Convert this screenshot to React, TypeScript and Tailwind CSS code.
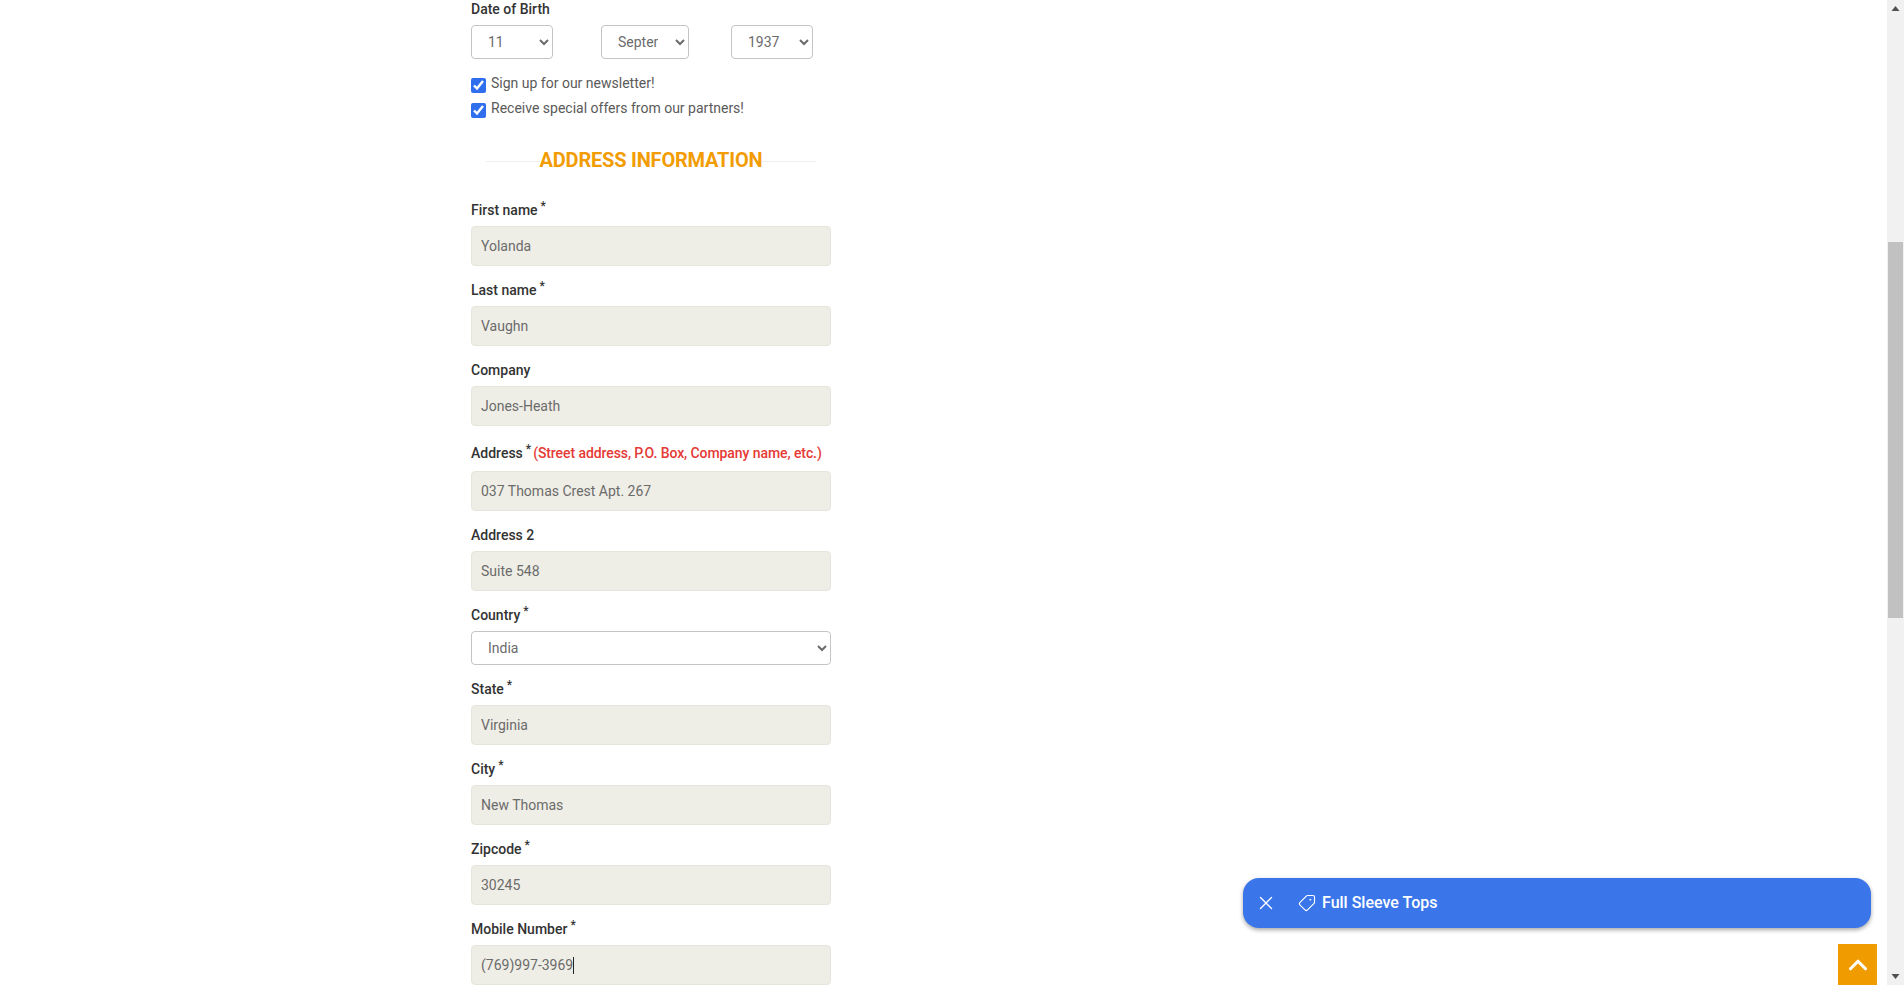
import React from "react";
import { X, Tag, ChevronUp } from "lucide-react";

const Star = () => <sup className="ml-[3px] text-[12px] leading-none text-[#333] top-[-5px] align-baseline relative">*</sup>;

function Label({ text, req, note, cls }: { text: string; req?: boolean; note?: string; cls?: string }) {
  return (
    <div className={"h-5 leading-5 text-[14px] font-medium text-[#333] whitespace-nowrap " + (cls ?? "mt-[14px] mb-[6px]")}>
      {text}
      {req && <Star />}
      {note && <span className="ml-[2px] tracking-[-0.08px] text-[#e53935]">{note}</span>}
    </div>
  );
}

function Field({ value, caret }: { value: string; caret?: boolean }) {
  return (
    <div className="relative">
      <input
        readOnly
        defaultValue={value}
        className="block w-[360px] h-10 px-[9px] rounded-[4px] border border-[#e6e5dc] bg-[#efeee6] text-[14px] text-[#6b6b6b] outline-none"
      />
      {caret && <span className="absolute left-[102px] top-[12px] w-px h-[17px] bg-[#222]" />}
    </div>
  );
}

function Select({ value, w }: { value: string; w: string }) {
  return (
    <select
      defaultValue={value}
      className={"block h-[34px] pl-3 pr-[14px] rounded-[4px] border border-[#c4c4c4] bg-white text-[14px] text-[#6b6b6b] outline-none " + w}
    >
      <option value={value}>{value}</option>
    </select>
  );
}

function Check({ text }: { text: string }) {
  return (
    <label className="flex items-start h-[25px]">
      <input type="checkbox" defaultChecked className="w-[15px] h-[15px] mt-[2px] m-0 accent-[#2f6fed]" />
      <span className="ml-[5px] -mt-px text-[14px] leading-[17px] text-[#5a5a5a]">{text}</span>
    </label>
  );
}

export default function App() {
  return (
    <div className="relative h-[985px] w-full overflow-hidden bg-white flex font-['Roboto',sans-serif]">
      <main className="flex-1 pl-[471px]">
        <div className="w-[360px]">
          <div className="h-[18px] leading-[18px] text-[14px] font-medium text-[#333]">Date of Birth</div>
          <div className="mt-[7px] flex">
            <Select value="11" w="w-[82px]" />
            <div className="ml-[48px]"><Select value="September" w="w-[88px]" /></div>
            <div className="ml-[42px]"><Select value="1937" w="w-[82px]" /></div>
          </div>
          <div className="mt-[17px]">
            <Check text="Sign up for our newsletter!" />
            <Check text="Receive special offers from our partners!" />
          </div>
          <div className="relative mt-[21px] h-[26px] w-[330px] ml-[15px] flex items-center justify-center">
            <div className="absolute left-0 right-0 top-[14px] h-px bg-[#eeeeee]" />
            <div className="relative px-[8px] text-[20px] leading-[26px] font-bold text-[#f29c04]">
              <span className="bg-white tracking-[-0.2px]">ADDRESS INFORMATION</span>
            </div>
          </div>
          <Label text="First name" req cls="mt-[27px] mb-[6px]" />
          <Field value="Yolanda" />
          <Label text="Last name" req />
          <Field value="Vaughn" />
          <Label text="Company" />
          <Field value="Jones-Heath" />
          <Label text="Address" req note="(Street address, P.O. Box, Company name, etc.)" cls="mt-[17px] mb-[8px]" />
          <Field value="037 Thomas Crest Apt. 267" />
          <Label text="Address 2" />
          <Field value="Suite 548" />
          <Label text="Country" req />
          <Select value="India" w="w-[360px]" />
          <Label text="State" req />
          <Field value="Virginia" />
          <Label text="City" req />
          <Field value="New Thomas" />
          <Label text="Zipcode" req />
          <Field value="30245" />
          <Label text="Mobile Number" req />
          <Field value="(769)997-3969" caret />
        </div>
      </main>

      <aside className="w-[17px] shrink-0 bg-[#f1f1f1] flex flex-col items-center">
        <svg width="17" height="17" viewBox="0 0 17 17" className="shrink-0"><path d="M8.5 6 L12.5 11 L4.5 11 Z" fill="#505050" /></svg>
        <div className="mt-[225px] w-[15px] h-[376px] bg-[#c1c1c1]" />
        <div className="flex-1" />
        <svg width="17" height="17" viewBox="0 0 17 17" className="shrink-0"><path d="M4.5 6 L12.5 6 L8.5 11 Z" fill="#505050" /></svg>
      </aside>

      <div className="absolute left-[1243px] top-[878px] w-[628px] h-[50px] rounded-[16px] bg-[#3a76e9] shadow-[0_2px_4px_rgba(0,0,0,0.35)] flex items-center pl-[12px] text-white">
        <X size={22} strokeWidth={1.5} />
        <Tag size={18} strokeWidth={1.5} className="ml-[21px] scale-x-[-1]" />
        <span className="ml-[6px] text-[16px] font-medium">Full Sleeve Tops</span>
      </div>

      <div className="absolute left-[1838px] top-[944px] w-[39px] h-[41px] bg-[#f09b00] flex items-center justify-center text-white">
        <ChevronUp size={30} strokeWidth={2.5} />
      </div>
    </div>
  );
}
